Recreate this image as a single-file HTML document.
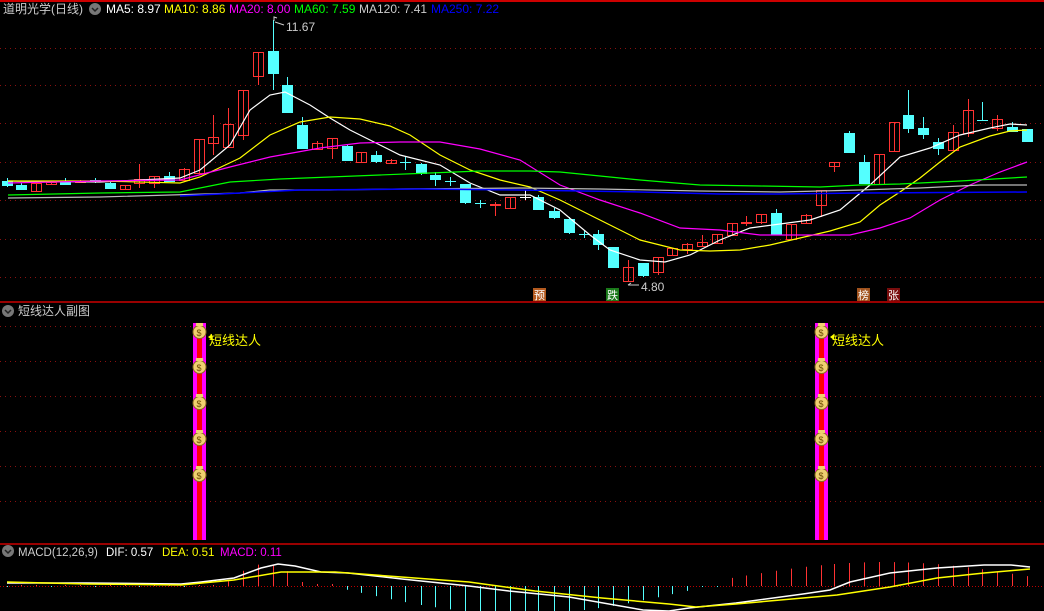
<!DOCTYPE html>
<html><head><meta charset="utf-8"><style>
body{margin:0;background:#000;width:1044px;height:611px;overflow:hidden;font-family:"Liberation Sans","Noto Sans CJK SC",sans-serif;}
svg{display:block}
text{font-family:"Liberation Sans","Noto Sans CJK SC",sans-serif;}
</style></head><body>
<svg id="s" width="1044" height="611" xmlns="http://www.w3.org/2000/svg">
<rect width="1044" height="611" fill="#000"/>
<line x1="0" y1="1" x2="1044" y2="1" stroke="#c00" stroke-width="2"/>
<g stroke="#8a1010" stroke-dasharray="1,4" stroke-width="1">
<line x1="0" y1="48.5" x2="1044" y2="48.5"/><line x1="0" y1="85.5" x2="1044" y2="85.5"/><line x1="0" y1="123.5" x2="1044" y2="123.5"/><line x1="0" y1="162.5" x2="1044" y2="162.5"/><line x1="0" y1="200.5" x2="1044" y2="200.5"/><line x1="0" y1="239.5" x2="1044" y2="239.5"/><line x1="0" y1="277.5" x2="1044" y2="277.5"/>
<line x1="0" y1="326.5" x2="1044" y2="326.5"/><line x1="0" y1="361.5" x2="1044" y2="361.5"/><line x1="0" y1="396.5" x2="1044" y2="396.5"/><line x1="0" y1="431.5" x2="1044" y2="431.5"/><line x1="0" y1="466.5" x2="1044" y2="466.5"/><line x1="0" y1="501.5" x2="1044" y2="501.5"/>
</g>
<line x1="0" y1="302" x2="1044" y2="302" stroke="#c00" stroke-width="1.5"/>
<line x1="0" y1="544" x2="1044" y2="544" stroke="#c00" stroke-width="1.5"/>
<line x1="0" y1="586.5" x2="1044" y2="586.5" stroke="#b00" stroke-dasharray="1,2"/>
<g id="c"></g>
<g fill="none" stroke-width="1.2">
<polyline stroke="#fff" points="8,181 100,182 180,178 200,170 230,145 250,110 270,95 285,92 310,105 330,118 350,130 370,140 400,155 440,165 470,183 500,195 530,195 560,210 590,235 610,250 640,260 665,262 690,255 720,240 750,228 780,224 810,220 840,210 870,185 900,157 930,148 960,135 990,128 1010,124 1027,125"/>
<polyline stroke="#ff0" points="8,181 100,181 180,183 200,177 240,158 270,135 300,122 330,117 360,119 390,126 410,135 440,155 470,170 500,180 530,187 560,200 600,220 640,240 680,250 710,251 740,250 770,245 800,238 830,231 860,222 880,205 900,192 920,178 940,162 960,147 990,136 1010,131 1027,130"/>
<polyline stroke="#f0f" points="8,183 100,181 180,180 230,167 270,157 320,148 360,143 400,142 440,142 480,149 520,160 560,185 600,200 640,213 680,228 720,230 760,235 800,235 850,235 880,228 910,218 940,200 970,185 1000,172 1027,162"/>
<polyline stroke="#0f0" points="8,195 100,193 180,192 230,182 280,179 330,177 380,175 430,173 480,171 530,171 560,172 600,176 640,180 700,185 760,186 820,187 860,185 900,184 960,181 1027,177"/>
<polyline stroke="#bbb" points="8,198 100,197 240,193 270,190 330,190 400,189 520,188 600,189 700,191 780,192 860,190 920,188 980,185 1027,185"/>
<polyline stroke="#00f" stroke-width="1.5" points="180,196 240,193 300,190 420,189 520,190 640,192 720,194 780,194 860,193 1027,192"/>
</g>
<g font-size="12">
<text x="3" y="13" fill="#ccc">道明光学(日线)</text>
<circle cx="95" cy="9" r="6" fill="#777"/><path d="M92 8 l3 3 l3 -3" stroke="#222" stroke-width="1.5" fill="none"/>
<text x="106" y="13" fill="#fff">MA5: 8.97</text>
<text x="164" y="13" fill="#ff0">MA10: 8.86</text>
<text x="229" y="13" fill="#f0f">MA20: 8.00</text>
<text x="294" y="13" fill="#0f0">MA60: 7.59</text>
<text x="359" y="13" fill="#ccc">MA120: 7.41</text>
<text x="431" y="13" fill="#00f">MA250: 7.22</text>
<text x="286" y="31" fill="#ccc">11.67</text>
<path d="M274 21 l0 -4 l3 1 M275 22 l9 3" stroke="#ccc" fill="none"/>
<text x="641" y="291" fill="#ccc">4.80</text>
<path d="M628 285 l11 0 M628 285 l3 -2" stroke="#ccc" fill="none"/>
</g>
<g font-size="11">
<rect x="533" y="288" width="13" height="13" fill="#b35a1f"/><text x="534" y="299" fill="#fff">预</text>
<rect x="606" y="288" width="13" height="13" fill="#1a7a1a"/><text x="607" y="299" fill="#fff">跌</text>
<rect x="857" y="288" width="13" height="13" fill="#a0521d"/><text x="858" y="299" fill="#fff">榜</text>
<rect x="887" y="288" width="13" height="13" fill="#7a0d0d"/><text x="888" y="299" fill="#fff">张</text>
</g>
<circle cx="8" cy="311" r="6" fill="#777"/><path d="M5 310 l3 3 l3 -3" stroke="#222" stroke-width="1.5" fill="none"/>
<text x="18" y="315" font-size="12" fill="#ccc">短线达人副图</text>
<g id="bars"></g>
<text x="209" y="345" font-size="13" fill="#ff0">短线达人</text>
<text x="832" y="345" font-size="13" fill="#ff0">短线达人</text>
<circle cx="8" cy="551" r="6" fill="#777"/><path d="M5 550 l3 3 l3 -3" stroke="#222" stroke-width="1.5" fill="none"/>
<g font-size="11.5"><text x="18" y="556" fill="#ccc">MACD(12,26,9)</text><text x="106" y="556" fill="#fff">DIF: 0.57</text><text x="162" y="556" fill="#ff0">DEA: 0.51</text><text x="220" y="556" fill="#f0f">MACD: 0.11</text></g>
<g id="m"></g>
<g fill="none" stroke-width="1.5">
<polyline stroke="#fff" points="7,583 87,583 181,584 201,582 234,578 261,568 278,564 295,566 321,572 348,573 402,579 469,586 509,591 569,597 643,610 669,611 689,608 736,603 803,594 830,590 850,582 890,573 937,568 984,565 1011,565 1030,567"/>
<polyline stroke="#ff0" points="7,582 87,584 181,585 234,580 281,572 335,572 375,575 469,582 535,591 602,598 669,604 696,607 736,604 837,595 890,587 937,578 984,573 1030,569"/>
</g>
</svg>
<script>
var N="http://www.w3.org/2000/svg";
function el(p,t,a){var e=document.createElementNS(N,t);for(var k in a)e.setAttribute(k,a[k]);p.appendChild(e);return e;}
var C=[[2,1,181,185,178,187],[16,1,185,189,183,190],[31,0,183,191,183,191],[46,0,182,184,181,185],[60,1,181,184,178,185],[75,0,181,182,180,183],[90,1,180,180,178,183],[105,1,183,188,182,189],[120,0,185,189,185,190],[134,0,179,183,164,188],[149,0,176,183,176,188],[164,1,176,181,172,182],[179,0,169,180,168,181],[194,0,139,173,139,175],[208,0,137,143,115,155],[223,0,124,147,108,148],[238,0,90,135,90,140],[253,0,52,76,52,85],[268,1,51,73,20,90],[282,1,85,112,77,112],[297,1,125,148,117,148],[312,0,143,149,141,150],[327,0,138,148,138,159],[342,1,146,160,144,160],[356,0,152,162,152,163],[371,1,155,161,151,163],[386,0,160,163,159,164],[400,1,162,162,157,170],[416,1,164,173,163,175],[430,1,175,179,172,186],[445,1,181,181,177,186],[460,1,184,202,184,204],[475,1,203,203,200,208],[490,0,204,204,202,216],[505,0,197,208,197,208],[520,2,197,197,190,200],[533,1,197,209,195,210],[549,1,211,217,208,219],[564,1,219,232,217,234],[579,1,234,234,230,238],[593,1,234,244,230,250],[608,1,247,267,247,267],[623,0,267,281,260,281],[638,1,263,275,263,277],[653,0,257,272,257,275],[667,0,248,255,248,255],[682,0,244,249,243,254],[697,0,242,246,235,247],[712,0,234,243,234,243],[727,0,223,235,223,235],[741,0,222,222,216,226],[756,0,214,222,214,224],[771,1,213,234,209,234],[786,0,224,239,224,239],[801,0,215,223,214,223],[816,0,190,205,190,217],[829,0,162,166,162,172],[844,1,133,152,131,153],[859,1,162,183,155,183],[874,0,154,184,154,184],[889,0,122,151,122,151],[903,1,115,128,90,133],[918,1,128,134,117,139],[933,1,142,148,138,155],[948,0,132,150,125,150],[963,0,110,133,99,137],[977,1,120,120,102,121],[992,0,119,128,115,131],[1007,1,127,131,122,131],[1022,1,129,141,129,142]];
var g=document.getElementById('c');
C.forEach(function(c){var x=c[0],col=c[1]==1?'#54ffff':(c[1]==2?'#fff':'#ff3232'),cx=x+5.5;
el(g,'line',{x1:cx,x2:cx,y1:c[4],y2:c[5],stroke:col});
var h=Math.max(1,c[3]-c[2]);
if(c[1]==0)el(g,'rect',{x:x+0.5,y:c[2]+0.5,width:10,height:h,fill:'none',stroke:col});
else el(g,'rect',{x:x,y:c[2],width:11,height:h+(h<=1?0:1),fill:col});});
var b=document.getElementById('bars');
[193,815].forEach(function(x){el(b,'rect',{x:x,y:323,width:13,height:217,fill:'#f0f'});el(b,'rect',{x:x+4,y:323,width:5,height:217,fill:'#f00'});
[330,365,401,437,473].forEach(function(y){el(b,'ellipse',{cx:x+6.5,cy:y+2,rx:6.5,ry:6.5,fill:'#f0d070',stroke:'#8a6a20'});el(b,'rect',{x:x+3,y:y-7,width:7,height:3,fill:'#f0d070'});var t=el(b,'text',{x:x+3.5,y:y+6,'font-size':'9',fill:'#6a4a00'});t.textContent='$';});
el(b,'path',{d:'M'+(x+15)+' 337 l4 -3 l0 6 z',fill:'#ff0'});});
var m=document.getElementById('m');
C.forEach(function(c){var x=c[0]+5.5,v=0;
if(x<225)v=(x%44<15)?1:-1;else if(x<305)v=-(Math.sin((x-225)/80*Math.PI)*20+2);else if(x<340)v=-2;else if(x<700)v=Math.sin((x-340)/360*Math.PI)*26+2;else if(x<730)v=1;else v=-(Math.sin((x-720)/330*Math.PI)*18+6);
el(m,'line',{x1:x,x2:x,y1:586,y2:586+v,stroke:v<0?'#ff3232':'#54ffff'});});
</script>
</body></html>
